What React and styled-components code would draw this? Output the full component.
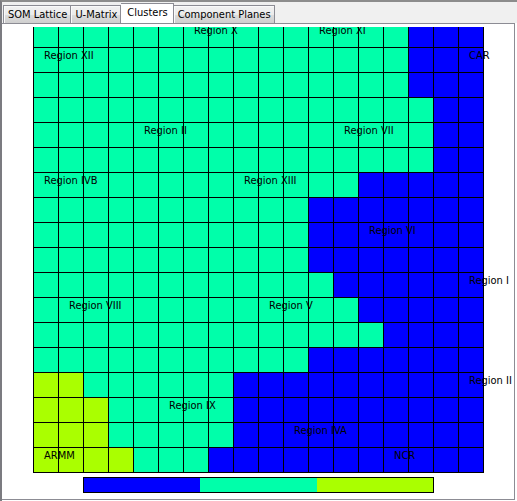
import React, { useState } from "react";
import styled, { createGlobalStyle } from "styled-components";

const GlobalStyle = createGlobalStyle`
  * { box-sizing: border-box; }
  body {
    margin: 0;
    background: #ffffff;
    color: #000000;
    font-family: "DejaVu Sans Condensed", "DejaVu Sans", sans-serif;
    font-size: 11px;
  }
`;

const Window = styled.div`
  display: flex;
  flex-direction: column;
  height: 100vh;
  border-top: 2px solid #8c8c8c;
  border-left: 2px solid #7b7b80;
  background: #ffffff;
`;

const TabBar = styled.div`
  display: flex;
  align-items: flex-end;
  height: 21px;
  padding-left: 1px;
  background: #f0f0f0;
`;

const Tab = styled.button`
  height: ${(p) => (p.$active ? 20 : 18)}px;
  padding: ${(p) => (p.$active ? "0 5px 2px 6px" : "0 3px 0 4px")};
  border: 1px solid #8c8c94;
  border-bottom: 0;
  border-left-width: ${(p) => (p.$joined ? 0 : 1)}px;
  background: ${(p) =>
    p.$active ? "#ffffff" : "linear-gradient(#f2f2f2 0%, #ebebeb 50%, #dddddd 51%, #cfcfcf 100%)"};
  box-shadow: ${(p) => (p.$active ? "0 1px 0 #ffffff" : "inset 1px 1px 0 #fafafa")};
  color: inherit;
  font: inherit;
  line-height: 16px;
  white-space: nowrap;
`;

const Panel = styled.main`
  display: flex;
  flex: 1;
  flex-direction: column;
  min-height: 0;
  margin: 0 2px 1px 0;
  padding: 3px 0 6px;
  border: 1px solid #8c8c94;
  border-left: 0;
  background: #ffffff;
`;

const MapViewport = styled.div`
  display: flex;
  flex: 1;
  flex-direction: column;
  justify-content: flex-end;
  min-height: 0;
  padding: 0 30px 0 31px;
  overflow: hidden;
`;

const Lattice = styled.div`
  display: grid;
  grid-template-columns: repeat(18, minmax(0, 1fr));
  grid-auto-rows: 25px;
  flex-shrink: 0;
  border-right: 1px solid #000000;
  border-bottom: 1px solid #000000;
`;

const Cell = styled.div`
  padding: 1px 0 0 10px;
  border-top: 1px solid #000000;
  border-left: 1px solid #000000;
  background: ${(p) => p.$color};
`;

const Label = styled.span`
  position: relative;
  z-index: 1;
  display: block;
  line-height: 13px;
  white-space: nowrap;
`;

const Legend = styled.div`
  display: flex;
  height: 16px;
  margin: 4px 80px 0 81px;
  border: 1px solid #000000;
`;

const Swatch = styled.div`
  flex: 1;
  background: ${(p) => p.$color};
`;

const BLUE = "#0000ff";
const GREEN = "#00ffaa";
const LIME = "#aaff00";

const TABS = ["SOM Lattice", "U-Matrix", "Clusters", "Component Planes"];

// Each row: number of lime cells, then the column where blue begins.
const ROWS = [
  [0, 15], [0, 15], [0, 15], [0, 16], [0, 16], [0, 16],
  [0, 13], [0, 11], [0, 11], [0, 11], [0, 12], [0, 13],
  [0, 14], [0, 11], [2, 8], [3, 8], [3, 8], [4, 7],
];

// Keys are "row,column".
const LABELS = {
  "0,6": "Region X",
  "0,11": "Region XI",
  "1,0": "Region XII",
  "1,17": "CAR",
  "4,4": "Region II",
  "4,12": "Region VII",
  "6,0": "Region IVB",
  "6,8": "Region XIII",
  "8,13": "Region VI",
  "10,17": "Region I",
  "11,1": "Region VIII",
  "11,9": "Region V",
  "14,17": "Region II",
  "15,5": "Region IX",
  "16,10": "Region IVA",
  "17,0": "ARMM",
  "17,14": "NCR",
};

const COLUMNS = Array.from({ length: 18 }, (_, i) => i);

export default function App() {
  const [active, setActive] = useState("Clusters");
  return (
    <Window>
      <GlobalStyle />
      <TabBar role="tablist">
        {TABS.map((name, i) => (
          <Tab
            key={name}
            type="button"
            role="tab"
            aria-selected={name === active}
            $active={name === active}
            $joined={i > 0}
            onClick={() => setActive(name)}
          >
            {name}
          </Tab>
        ))}
      </TabBar>
      <Panel role="tabpanel">
        <MapViewport>
          <Lattice>
            {ROWS.map(([lime, blue], r) =>
              COLUMNS.map((c) => {
                const label = LABELS[`${r},${c}`];
                return (
                  <Cell key={`${r},${c}`} $color={c < lime ? LIME : c < blue ? GREEN : BLUE}>
                    {label && <Label>{label}</Label>}
                  </Cell>
                );
              })
            )}
          </Lattice>
        </MapViewport>
        <Legend>
          <Swatch $color={BLUE} />
          <Swatch $color={GREEN} />
          <Swatch $color={LIME} />
        </Legend>
      </Panel>
    </Window>
  );
}
